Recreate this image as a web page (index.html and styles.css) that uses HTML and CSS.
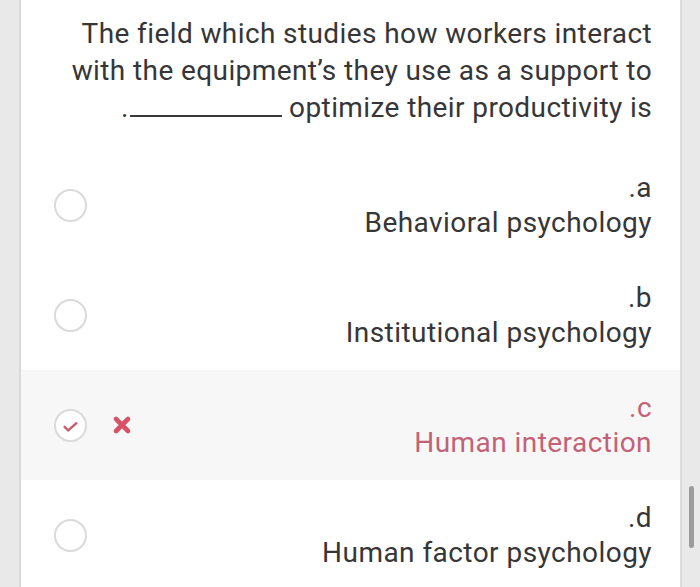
FILE: index.html
```html
<!DOCTYPE html>
<html>
<head>
<meta charset="utf-8">
<link rel="stylesheet" href="styles.css">
</head>
<body>
<div class="frame">
  <div class="gutter gutter-left"></div>
  <main class="content">
    <div class="question">
      <p>The field which studies how workers interact<br>with the equipment’s they use as a support to<br><span class="blank">.<span class="line"></span></span> optimize their productivity is</p>
    </div>
    <div class="option">
      <span class="radio"></span>
      <span class="mark"></span>
      <div class="label"><div class="letter">.a</div><div class="answer">Behavioral psychology</div></div>
    </div>
    <div class="option">
      <span class="radio"></span>
      <span class="mark"></span>
      <div class="label"><div class="letter">.b</div><div class="answer">Institutional psychology</div></div>
    </div>
    <div class="option selected">
      <span class="radio checked">
        <svg viewBox="0 0 32 32" width="32" height="32"><path d="M9.5 17.5 L13.5 21.5 L22.5 13.5" fill="none" stroke="#c75a6e" stroke-width="2.6" stroke-linecap="round" stroke-linejoin="round"/></svg>
      </span>
      <span class="mark">
        <svg viewBox="0 0 20 20" width="20" height="20"><path d="M4 4 L16 16 M16 4 L4 16" stroke="#d75266" stroke-width="4.6" stroke-linecap="round"/></svg>
      </span>
      <div class="label wrong"><div class="letter">.c</div><div class="answer">Human interaction</div></div>
    </div>
    <div class="option">
      <span class="radio"></span>
      <span class="mark"></span>
      <div class="label"><div class="letter">.d</div><div class="answer">Human factor psychology</div></div>
    </div>
  </main>
  <div class="gutter gutter-right"><div class="thumb"></div></div>
</div>
</body>
</html>
```
FILE: styles.css
```css
html, body {
  margin: 0;
  padding: 0;
  height: 100%;
  overflow: hidden;
}
body {
  font-family: Roboto, "Liberation Sans", sans-serif;
  color: #363636;
  background: #fff;
}
.frame {
  display: flex;
  height: 587px;
}
.gutter {
  background: #e9e9e9;
  flex: none;
}
.gutter-left {
  width: 19px;
  border-right: 2px solid #d9d9d9;
}
.gutter-right {
  width: 18px;
  border-left: 2px solid #dcdcdc;
  position: relative;
}
.thumb {
  position: absolute;
  left: 7px;
  top: 486px;
  width: 5px;
  height: 62px;
  border-radius: 3px;
  background: #9c9c9c;
}
.content {
  flex: 1;
  background: #fff;
}
.question {
  height: 150px;
  box-sizing: border-box;
  padding: 15px 28px 0 0;
  text-align: right;
}
.question p {
  margin: 0;
  font-size: 28px;
  line-height: 37px;
  letter-spacing: 0.4px;
}
.blank {
  display: inline-flex;
  align-items: baseline;
}
.line {
  display: inline-block;
  width: 152px;
  border-bottom: 2px solid #3a3a3a;
  height: 0;
  margin-left: 1px;
}
.option {
  height: 110px;
  display: flex;
  align-items: center;
  padding: 0 28px 0 33px;
}
.option.selected {
  background: #f7f7f7;
}
.radio {
  width: 29px;
  height: 29px;
  border: 2px solid #dadada;
  border-radius: 50%;
  background: #fff;
  flex: none;
  display: flex;
  align-items: center;
  justify-content: center;
}
.radio svg {
  width: 31px;
  height: 31px;
}
.mark {
  width: 20px;
  height: 20px;
  margin-left: 25px;
  flex: none;
  display: flex;
}
.label {
  flex: 1;
  text-align: right;
  font-size: 28px;
  line-height: 35px;
  letter-spacing: 0.45px;
}
.wrong {
  color: #c36276;
}
```
